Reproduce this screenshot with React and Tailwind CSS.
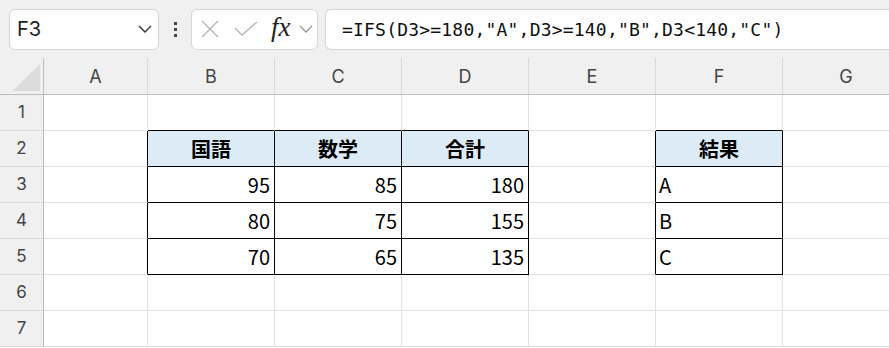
import React from "react";

const COLS = ["A", "B", "C", "D", "E", "F", "G"];
const COLW = ["w-[104px]", "w-[127px]", "w-[127px]", "w-[127px]", "w-[127px]", "w-[127px]", "w-[127px]"];

const DATA = {
  2: { B: "国語", C: "数学", D: "合計", F: "結果" },
  3: { B: "95", C: "85", D: "180", F: "A" },
  4: { B: "80", C: "75", D: "155", F: "B" },
  5: { B: "70", C: "65", D: "135", F: "C" },
};

function inBox(r, ci) {
  const c = COLS[ci];
  return r >= 2 && r <= 5 && ["B", "C", "D", "F"].includes(c);
}

function Chevron({ className }) {
  return (
    <svg width="14" height="8" viewBox="0 0 14 8" className={className}>
      <polyline points="1,1 7,7 13,1" fill="none" stroke="currentColor" strokeWidth="1.4" />
    </svg>
  );
}

function Toolbar() {
  return (
    <div className="h-[58px] bg-[#f0f0f0] flex items-center pl-[9px] gap-0 overflow-hidden">
      <div className="w-[150px] h-[41px] shrink-0 bg-white border border-[#d6d6d6] rounded-[6px] flex items-center justify-between pl-[7px] pr-[6px]">
        <span className="font-['Inter',sans-serif] text-[20px] text-[#222]">F3</span>
        <Chevron className="text-[#333]" />
      </div>
      <div className="w-[32px] shrink-0 flex flex-col items-center gap-[3px]">
        <div className="w-[3px] h-[3px] bg-[#444]" />
        <div className="w-[3px] h-[3px] bg-[#444]" />
        <div className="w-[3px] h-[3px] bg-[#444]" />
      </div>
      <div className="w-[127px] h-[41px] shrink-0 bg-white border border-[#d6d6d6] rounded-[6px] flex items-center pl-[9px]">
        <svg width="18" height="18" viewBox="0 0 18 18">
          <line x1="1" y1="1" x2="17" y2="17" stroke="#b5b5b5" strokeWidth="1.3" />
          <line x1="17" y1="1" x2="1" y2="17" stroke="#b5b5b5" strokeWidth="1.3" />
        </svg>
        <svg width="24" height="16" viewBox="0 0 24 16" className="ml-[15px]">
          <polyline points="1,7 8,14 23,1" fill="none" stroke="#b5b5b5" strokeWidth="1.3" />
        </svg>
        <span className="ml-[13px] font-['Liberation_Serif',serif] italic font-medium text-[27px] text-[#222] leading-none -mt-[3px]">fx</span>
        <Chevron className="text-[#999] ml-[8px]" />
      </div>
      <div className="ml-[7px] w-[600px] h-[41px] shrink-0 bg-white border border-r-0 border-[#d6d6d6] rounded-l-[6px] flex items-center pl-[16px]">
        <span className="font-['DejaVu_Sans_Mono',monospace] text-[18px] tracking-[0.2px] text-[#111]">
          =IFS(D3&gt;=180,"A",D3&gt;=140,"B",D3&lt;140,"C")
        </span>
      </div>
    </div>
  );
}

function HeaderRow() {
  return (
    <div className="flex h-[37px] bg-[#f0f0f0] border-b border-[#bdbdbd]">
      <div className="w-[44px] shrink-0 border-r border-[#bdbdbd] flex items-end justify-start">
        <svg width="43" height="36" viewBox="0 0 43 36">
          <polygon points="12,33 40,33 40,6" fill="#dcdcdc" />
        </svg>
      </div>
      {COLS.map((c, i) => (
        <div
          key={c}
          className={`${COLW[i]} shrink-0 border-r border-[#dadada] flex items-center justify-center font-['Inter',sans-serif] text-[18px] text-[#444]`}
        >
          {c}
        </div>
      ))}
    </div>
  );
}

function Row({ r }) {
  const rowData = DATA[r] || {};
  return (
    <div className="flex h-[36px]">
      <div className="w-[44px] shrink-0 bg-[#f0f0f0] border-r border-r-[#bdbdbd] border-b border-b-[#dadada] flex items-center justify-center font-['Inter',sans-serif] text-[17px] text-[#444]">
        {r}
      </div>
      {COLS.map((c, i) => {
        const v = rowData[c];
        const isHead = r === 2 && v !== undefined;
        const rightBlack = inBox(r, i) || inBox(r, i + 1);
        const bottomBlack = inBox(r, i) || inBox(r + 1, i);
        const isNum = v !== undefined && /^\d+$/.test(v);
        const align = isHead ? "justify-center" : isNum ? "justify-end pr-[4px]" : "justify-start pl-[3px]";
        return (
          <div
            key={c}
            className={`${COLW[i]} shrink-0 border-r border-b ${rightBlack ? "border-r-black" : "border-r-[#e1e1e1]"} ${
              bottomBlack ? "border-b-black" : "border-b-[#e1e1e1]"
            } ${isHead ? "bg-[#ddebf7] font-bold" : "bg-white"} flex items-center ${align} font-['Noto_Sans_CJK_JP',sans-serif] text-[20px] text-black leading-none`}
          >
            {v}
          </div>
        );
      })}
    </div>
  );
}

export default function App() {
  return (
    <div className="w-[889px] h-[348px] overflow-hidden bg-white">
      <Toolbar />
      <div className="overflow-hidden">
        <div className="w-[1000px]">
          <HeaderRow />
          {[1, 2, 3, 4, 5, 6, 7].map((r) => (
            <Row key={r} r={r} />
          ))}
        </div>
      </div>
    </div>
  );
}
